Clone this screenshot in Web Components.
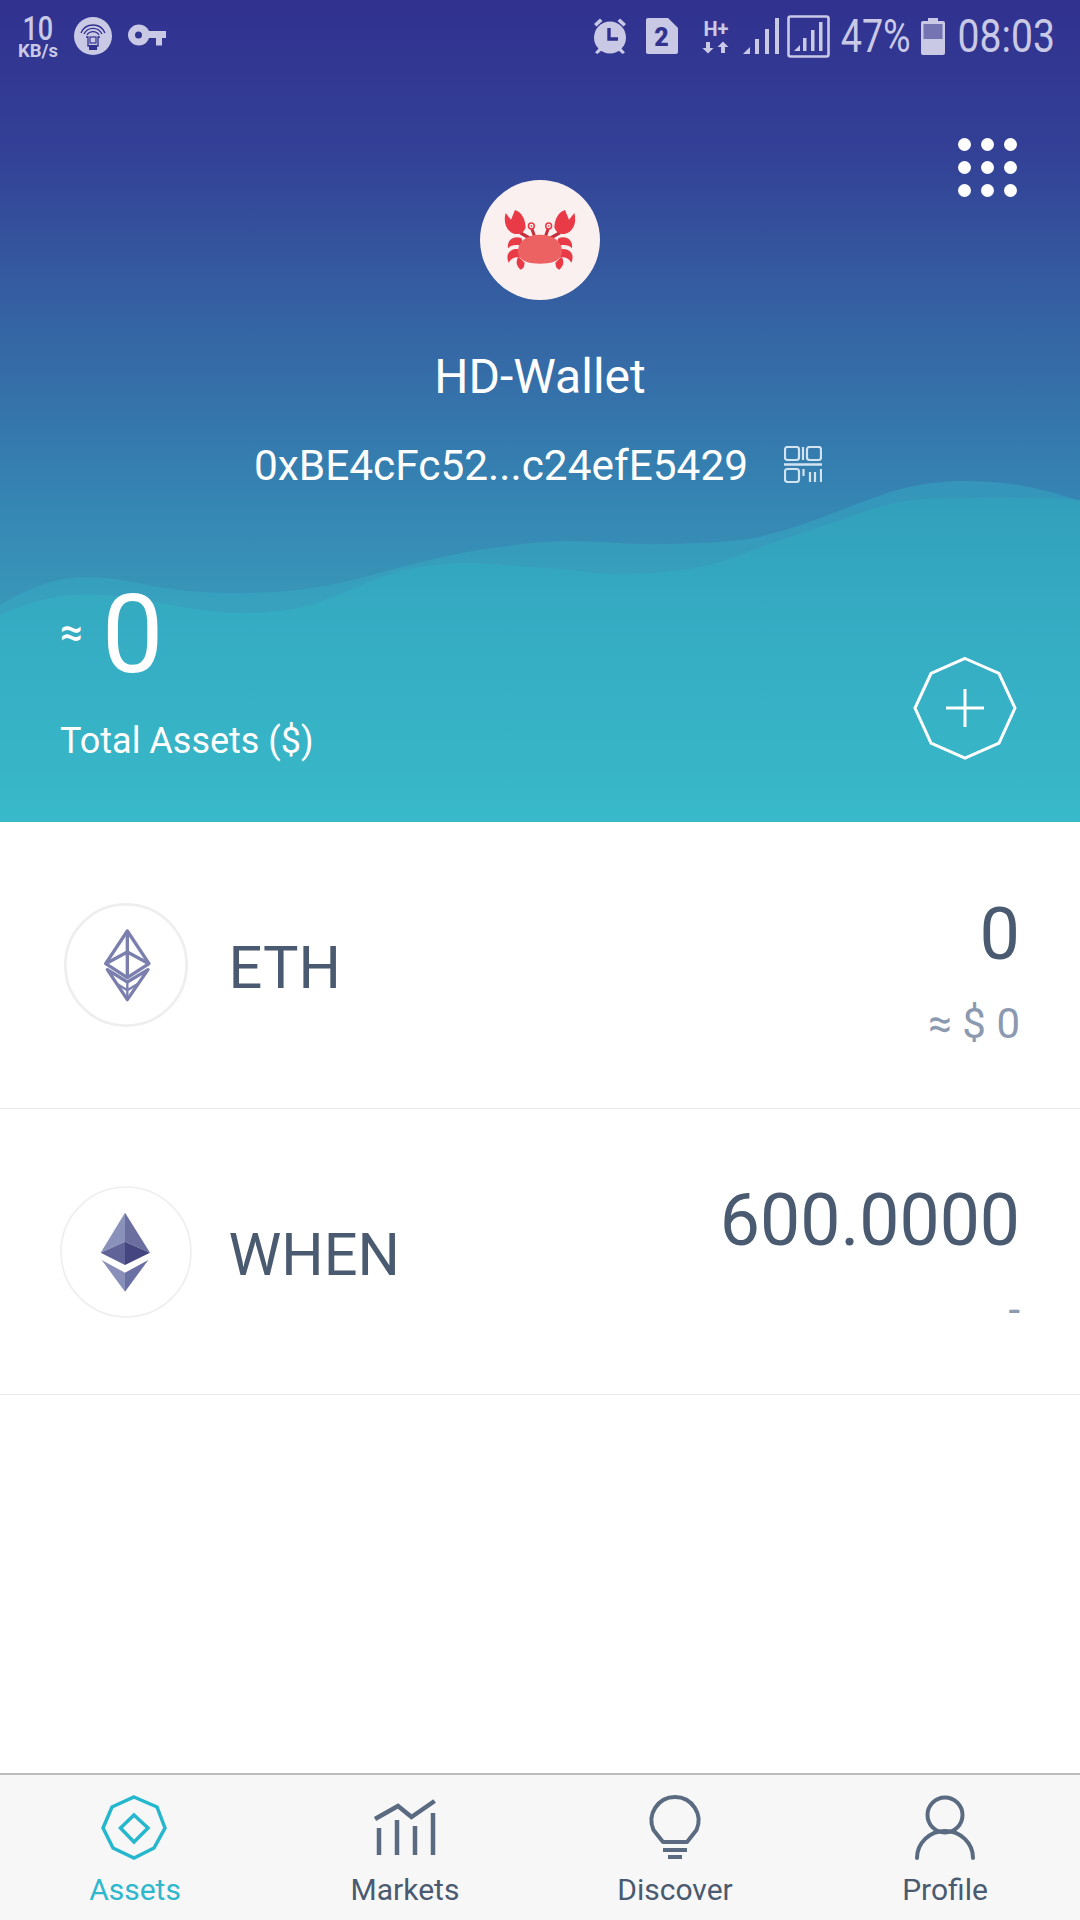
<!DOCTYPE html>
<html><head><meta charset="utf-8">
<style>
html,body{margin:0;padding:0;background:#fff;font-family:Roboto,"Noto Sans",sans-serif}
</style></head>
<body>
<wallet-app></wallet-app>
<script>
function el(name,html){customElements.define(name,class extends HTMLElement{constructor(){super();this.attachShadow({mode:'open'}).innerHTML=html(this)}})}

const crab=`<svg viewBox="120 180 360 360" width="120" height="120"><defs><g id="half">
<path d="M240 338L268 354" stroke="#c52d3a" stroke-width="10" fill="none"/>
<path d="M275 325L283 347" stroke="#c52d3a" stroke-width="9" fill="none"/>
<circle cx="274" cy="318" r="11" fill="#e93a47"/><circle cx="274" cy="318" r="6.5" fill="#fbeeee"/><circle cx="274" cy="318" r="2.5" fill="#c52d3a"/>
<path d="M225 270C244 276 256 296 257 322C252 338 240 344 226 342C202 337 188 310 197 279L213 299Z" fill="#e93a47"/>
<path d="M204 385C200 362 220 345 245 355L250 380C232 372 215 374 204 385Z" fill="#e93a47"/>
<path d="M206 428C195 405 208 383 240 388L240 412C224 410 214 415 206 428Z" fill="#e93a47"/>
<path d="M242 449C226 436 228 420 236 410L254 428C252 436 254 444 242 449Z" fill="#e93a47"/></g></defs>
<use href="#half"/><use href="#half" transform="translate(600 0) scale(-1 1)"/>
<path d="M300 344C342 344 366 365 366 394C366 424 332 431 300 431C268 431 234 424 234 394C234 365 258 344 300 344Z" fill="#ec6161"/></svg>`;

el('status-bar',()=>`<style>
:host{display:flex;height:72px;box-sizing:border-box;color:#c9c9e6;align-items:center;justify-content:space-between;padding:0 25px 0 17px;position:relative}
.g{display:flex;align-items:center}
svg{display:block;flex:none}
.sp{width:42px;display:flex;flex-direction:column;align-items:center;font-weight:500;line-height:1;margin-top:4px}
.sp b{font-weight:500;font-size:33px;line-height:25px;display:inline-block;transform:scaleX(.82)}
.sp i{font-style:normal;font-weight:700;font-size:18.500px;line-height:18px;margin-top:1px}
.t{font-size:46px;line-height:46px;display:inline-block;white-space:nowrap}
.pc{width:70px;display:flex;justify-content:center;margin:0 10px 0 11px}
.pc .t{transform:scaleX(.82)}
.tm{width:97px;display:flex;justify-content:center;margin-left:13px}
.tm .t{transform:scaleX(.85)}
.net{width:28px;height:36px;margin-left:24px;display:flex;flex-direction:column;align-items:center}
.net span{font-size:20px;font-weight:700;line-height:22px;height:22px;display:block;white-space:nowrap}
.net svg{margin-top:1px}
</style>
<div class="g"><div class="sp"><b>10</b><i>KB/s</i></div>
<svg style="margin-left:15px" width="38" height="38" viewBox="0 0 38 38"><circle cx="19" cy="19" r="19" fill="#c9c9e6"/><g fill="none" stroke="#31318f" stroke-width="1.300"><path d="M7 16A13 13 0 0 1 31 16M10 17A10 10 0 0 1 28 17M13 18A7 7 0 0 1 25 18"/><path d="M12 20H14V29H24V20H26"/></g><rect x="15" y="28" width="8" height="5" fill="#31318f"/><rect x="16" y="20" width="6" height="6" fill="none" stroke="#31318f" stroke-width="1.200"/></svg>
<svg style="margin-left:16px" width="38" height="24" viewBox="0 0 38 24"><path fill="#c9c9e6" fill-rule="evenodd" d="M11 0.5C16 0.5 19.500 3.500 21 7H38V14H34V21.500H28V14H21C19.500 18.500 16 21.500 11 21.500C5 21.500 0 16.500 0 11S5 .5 11 .5ZM10.500 7.500A3.500 3.500 0 1 0 10.500 14.500A3.500 3.500 0 1 0 10.500 7.500Z"/></svg></div>
<div class="g">
<svg width="38" height="38" viewBox="0 0 38 38"><g fill="#c9c9e6"><circle cx="19" cy="20.500" r="16"/><path d="M3 7L9 1.500L11.500 4L5.500 9.500ZM35 7L29 1.500L26.500 4L32.500 9.500Z"/><path d="M8 31L4 35.500L6.500 37L11 33ZM30 31L34 35.500L31.500 37L27 33Z"/></g><path d="M18 11V22H27" fill="none" stroke="#31318f" stroke-width="3.400"/></svg>
<svg style="margin-left:17px" width="32" height="36" viewBox="0 0 32 36"><path fill="#c9c9e6" d="M2 0H22L32 10V34Q32 36 30 36H2Q0 36 0 34V2Q0 0 2 0Z"/><text x="15.500" y="28" text-anchor="middle" font-family="Roboto" font-weight="900" font-size="25" fill="#31318f">2</text></svg>
<div class="net"><span>H+</span><svg width="28" height="13" viewBox="0 24 28 13"><path fill="#c9c9e6" d="M4 25H8V31H11.500L6 36.500L.5 31H4ZM19 36H23V30H26.500L21 24.500L15.500 30H19Z"/></svg></div>
<svg style="margin-left:13px" width="37" height="36" viewBox="0 0 37 36"><g fill="#c9c9e6"><path d="M0 36L7 29V36Z"/><rect x="12" y="21" width="4" height="15"/><rect x="22" y="11" width="4" height="25"/><rect x="32" y="0" width="4" height="36"/></g></svg>
<svg style="margin-left:7px" width="43" height="43" viewBox="0 0 43 43"><rect x="1.500" y="1.500" width="40" height="40" rx="2" fill="none" stroke="#c9c9e6" stroke-width="2.600"/><g fill="#c9c9e6"><path d="M7 36L13 30V36Z"/><rect x="16" y="23" width="3.500" height="13"/><rect x="24" y="15" width="3.500" height="21"/><rect x="32" y="7" width="3.500" height="29"/></g></svg>
<div class="pc"><span class="t">47%</span></div>
<svg width="24" height="37" viewBox="0 0 24 37"><path fill="#c9c9e6" d="M7 0H17V3H22Q24 3 24 5V35Q24 37 22 37H2Q0 37 0 35V5Q0 3 2 3H7Z"/><rect x="2.500" y="6" width="19" height="15" fill="#7474b2"/></svg>
<div class="tm"><span class="t">08:03</span></div>
</div>`);

el('dots-button',()=>`<style>
:host{display:grid;grid-template-columns:repeat(3,13px);grid-auto-rows:13px;gap:10px;}
i{background:#fff;border-radius:50%}
</style><i></i><i></i><i></i><i></i><i></i><i></i><i></i><i></i><i></i>`);

el('wave-bg',()=>`<style>:host{position:absolute;inset:0;display:block}svg{display:block}</style>
<svg width="1080" height="822" viewBox="0 0 1080 822"><defs><linearGradient id="f" gradientUnits="userSpaceOnUse" x1="0" y1="500" x2="0" y2="822"><stop offset="0" stop-color="#32a0bc"/><stop offset=".35" stop-color="#35abc2"/><stop offset="1" stop-color="#38b9c9"/></linearGradient></defs>
<path fill="#38b0c6" fill-opacity=".42" d="M0 605C28 588 55 577 86 577C110 577 128 581 148 585C178 591 205 593 234 593C275 593 310 590 344 582C375 575 400 566 430 560C455 554 480 549 500 547C522 544 545 541 567 541C600 541 635 545 667 544C702 543 735 543 767 535C790 529 810 522 833 513C860 503 880 495 900 489C925 483 945 481 964 481C1005 481 1040 487 1080 501V822H0Z"/>
<path fill="url(#f)" d="M0 615C28 603 55 594 86 594C110 594 132 598 155 602C182 607 212 613 241 613C265 613 288 611 310 605C335 597 355 587 379 578C405 568 435 563 465 563C490 563 510 566 550 568C575 570 595 574 617 574C645 574 672 572 700 567C725 562 745 553 767 545C790 537 810 530 833 523C860 513 880 506 900 502C925 498 945 498 964 498C1010 497 1050 498 1080 500V822H0Z"/></svg>`);

el('add-button',()=>`<style>:host{display:block;width:104px;height:104px}svg{display:block}</style>
<svg width="104" height="104" viewBox="0 0 104 104" fill="none" stroke="#fff" stroke-width="3"><path d="M52 2.500L86 17.500L102 52L86 87L52 102L18 87L2 52L18 17.500Z"/><path d="M52 33V71M33 52H71"/></svg>`);

el('wallet-header',()=>`<style>
:host{display:block;position:relative;height:822px;background:linear-gradient(180deg,#31318f 0,#334096 150px,#3563a3 320px,#3585b3 500px,#3896b9 600px,#3896b9 100%);color:#fff;overflow:hidden;flex:none}
.c{position:relative;display:flex;flex-direction:column;height:100%}
.top{display:grid;grid-template-columns:1fr auto 1fr;margin-top:66px}
.apps{justify-self:end;margin-right:63px}
.av{margin-top:42px;width:120px;height:120px;border-radius:50%;background:#faf0f0;grid-column:2}
.name{text-align:center;font-size:48px;line-height:56px;margin-top:49px}
.addr{display:flex;justify-content:center;align-items:center;margin-top:35px;height:50px}
.addr span{font-size:42.400px;margin-left:-4px;white-space:nowrap}
.addr svg{margin-left:36px;flex:none;margin-top:-2px}
.bot{margin-top:auto;display:flex;justify-content:space-between;align-items:flex-end;padding:0 63px 64px 60px}
.left{margin-bottom:-4px}
.bal{display:flex;align-items:center;height:90px}
.ap{font-size:40px;margin-right:19px;margin-top:-4px;font-weight:500;line-height:40px}
.z{font-size:110px;line-height:90px}
.lab{font-size:36px;line-height:42px;margin-top:40px}
add-button{margin-bottom:-2px}
</style>
<wave-bg></wave-bg>
<div class="c"><status-bar></status-bar>
<div class="top"><div class="av">${crab}</div><dots-button class="apps"></dots-button></div>
<div class="name">HD-Wallet</div>
<div class="addr"><span>0xBE4cFc52...c24efE5429</span>
<svg width="38" height="37" viewBox="0 0 38 37" fill="none" stroke="#d3e3f0" stroke-width="2.200"><rect x="1" y="1" width="14" height="13" rx="2.500"/><rect x="23" y="1" width="14" height="13" rx="2.500"/><path d="M19 1V14"/><path d="M0 18.500H38" stroke-width="2.600"/><rect x="1" y="23" width="14" height="13" rx="2.500"/><path d="M19.500 23V30M26 26V36M31 26V36M37 23V36"/></svg></div>
<div class="bot"><div class="left"><div class="bal"><span class="ap">≈</span><span class="z">0</span></div><div class="lab">Total Assets ($)</div></div><add-button></add-button></div>
</div>`);

el('asset-row',h=>`<style>
:host{display:flex;align-items:center;box-sizing:border-box;border-bottom:1px solid #e8e9ec;color:#4a5a70;position:relative}
.ic{flex:none;display:flex;justify-content:center;width:134px;margin-left:59px}
.s{font-size:59.500px;margin-left:35.500px;line-height:70px;flex:1;margin-top:6px}
.r{text-align:right;margin-right:60px;margin-top:10px}
.a{line-height:84px}
.f{color:#8b9ab0;line-height:48px;margin-top:23px}
</style><div class="ic"><slot name="icon"></slot></div><div class="s">${h.getAttribute('symbol')}</div>
<div class="r"><div class="a" style="font-size:${h.getAttribute('size')}px">${h.getAttribute('amount')}</div><div class="f" style="font-size:${h.getAttribute('fsize')}px">${h.getAttribute('fiat')}</div></div>`);

el('tab-item',h=>`<style>
:host{display:flex;flex-direction:column;align-items:center;flex:1;padding-top:20px;font-size:30px;color:${h.hasAttribute('active')?'#2fb8cc':'#4a5a70'}}
.l{line-height:36px;margin-top:7px}
::slotted(svg){display:block}
</style><slot name="icon"></slot><div class="l"><slot></slot></div>`);

el('tab-bar',()=>`<style>:host{display:flex;height:147px;box-sizing:border-box;border-top:2px solid #bcbcbc;background:#f7f7f7;flex:none}</style><slot></slot>`);

el('wallet-app',()=>`<style>
:host{display:flex;flex-direction:column;width:1080px;height:1920px;overflow:hidden;background:#fff}
.list{flex:1;display:flex;flex-direction:column}
.r1{height:287px}.r2{height:286px}
</style>
<wallet-header></wallet-header>
<div class="list">
<asset-row class="r1" symbol="ETH" amount="0" fiat="≈ $ 0" size="72" fsize="42">
<svg slot="icon" width="124" height="124" viewBox="70 68 372 372" style="display:block;margin-left:-1px" fill="none"><circle cx="256" cy="254" r="182" stroke="#eeeeef" stroke-width="8"/><g stroke="#7a7fae" stroke-width="10" stroke-linejoin="round"><path d="M260 152L195 250L260 292L325 250Z"/><path d="M195 250L260 215L325 250M260 152V292"/><path d="M200 268L260 305L322 268L260 358Z"/><path d="M260 305V358M228 310L260 330L292 310" stroke-width="7"/></g></svg>
</asset-row>
<asset-row class="r2" symbol="WHEN" amount="600.0000" fiat="-" size="71.500" fsize="42">
<svg slot="icon" width="132" height="132" viewBox="60 918 396 396" style="display:block"><circle cx="258" cy="1116" r="195" fill="none" stroke="#eeeeef" stroke-width="5"/><path fill="#8a92bb" d="M255 998L182 1118L255 1085Z"/><path fill="#6a6fa0" d="M255 998L330 1118L255 1085Z"/><path fill="#5f6398" d="M182 1118L255 1085V1155Z"/><path fill="#45467f" d="M330 1118L255 1085V1155Z"/><path fill="#8890ba" d="M185 1140L255 1178V1235Z"/><path fill="#6a70a3" d="M325 1140L255 1178V1235Z"/></svg>
</asset-row>
</div>
<tab-bar>
<tab-item active>Assets<svg slot="icon" width="80" height="70" viewBox="0 0 80 70" fill="none" stroke="#25b7ce" stroke-width="3.500"><path d="M39 2L62 12L70 33L59 53L39 63L18 53L8 33L17 12Z"/><path d="M39 20L53 33L39 47L25.500 33Z"/></svg></tab-item>
<tab-item>Markets<svg slot="icon" width="80" height="70" viewBox="0 0 80 70" fill="none" stroke="#5a6a80" stroke-width="4.500"><path d="M14 33V60M32 25V60M50 31V60M68 18V60"/><path d="M10 24L33 11L46.500 22L69.600 6"/></svg></tab-item>
<tab-item>Discover<svg slot="icon" width="80" height="70" viewBox="0 0 80 70" fill="none" stroke="#5a6a80" stroke-width="4"><path d="M28 47H52L61.500 35A23.500 23.500 0 1 0 18.500 35Z" stroke-linejoin="round"/><path d="M28 55H52M33 62H47"/></svg></tab-item>
<tab-item>Profile<svg slot="icon" width="80" height="70" viewBox="0 0 80 70" fill="none" stroke="#5a6a80" stroke-width="4"><circle cx="40" cy="20" r="17.500"/><path d="M12 63A28 27 0 0 1 68 63" stroke-linecap="round"/></svg></tab-item>
</tab-bar>`);
</script>
</body></html>
